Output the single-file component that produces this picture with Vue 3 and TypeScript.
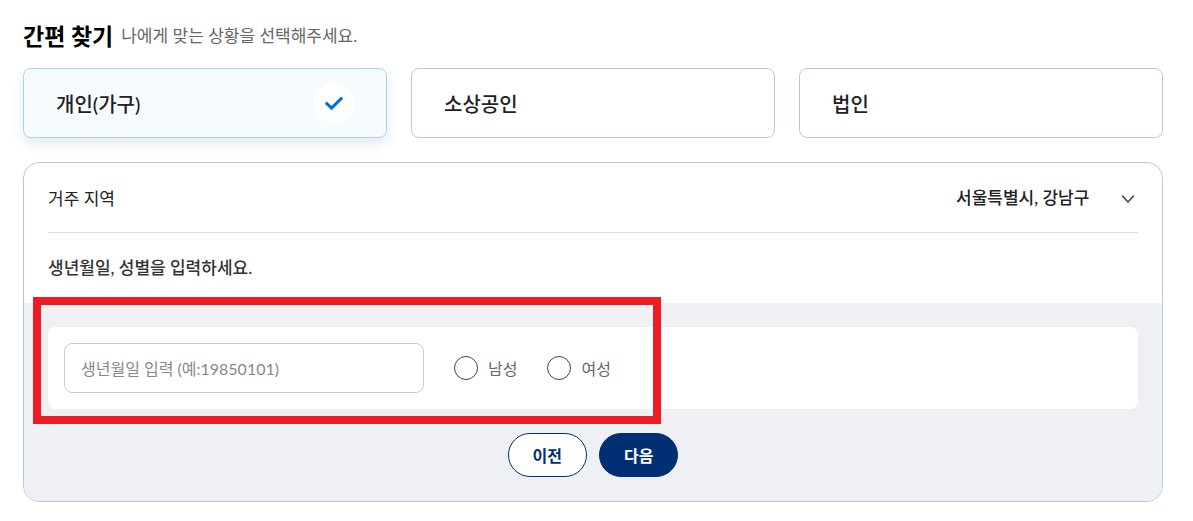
<script setup lang="ts">
import { ref } from 'vue'

const types: string[] = ['개인(가구)', '소상공인', '법인']
const selectedType = ref<string>(types[0])
const regions: string[] = ['서울특별시, 강남구']
const region = ref<string>(regions[0])
const birth = ref<string>('')
const gender = ref<string>('')
const genders = [
  { value: 'male', label: '남성' },
  { value: 'female', label: '여성' },
]
</script>

<template>
  <main class="finder">
    <header class="head">
      <h1>간편 찾기</h1>
      <p>나에게 맞는 상황을 선택해주세요.</p>
    </header>

    <div class="types">
      <button
        v-for="t in types"
        :key="t"
        type="button"
        class="type"
        :class="{ active: selectedType === t }"
        :aria-pressed="selectedType === t"
        @click="selectedType = t"
      >
        <span>{{ t }}</span>
        <span v-if="selectedType === t" class="check">
          <svg width="20" height="16" viewBox="0 0 20 16" fill="none" aria-hidden="true">
            <path d="M1.8 7.7 7.5 13.1 18.2 2.7" stroke="#0070e6" stroke-width="3" />
          </svg>
        </span>
      </button>
    </div>

    <form class="panel" @submit.prevent>
      <div class="region">
        <label for="region">거주 지역</label>
        <div class="picker">
          <select id="region" v-model="region">
            <option v-for="r in regions" :key="r" :value="r">{{ r }}</option>
          </select>
          <svg width="14" height="10" viewBox="0 0 14 10" fill="none" aria-hidden="true">
            <path d="M1 2.5 7 9 13 2.5" stroke="#444" stroke-width="1.5" />
          </svg>
        </div>
      </div>
      <h2>생년월일, 성별을 입력하세요.</h2>

      <div class="answer">
        <div class="box">
          <div class="fields">
            <input
              v-model="birth"
              class="birth"
              type="text"
              inputmode="numeric"
              aria-label="생년월일"
              placeholder="생년월일 입력 (예:19850101)"
            />
            <label v-for="g in genders" :key="g.value" class="gender">
              <input v-model="gender" type="radio" name="gender" :value="g.value" />
              <span>{{ g.label }}</span>
            </label>
            <div class="highlight" aria-hidden="true"></div>
          </div>
        </div>
        <div class="actions">
          <button type="button" class="prev">이전</button>
          <button type="submit" class="next">다음</button>
        </div>
      </div>
    </form>
  </main>
</template>

<style>
body {
  background: #fff;
}
</style>

<style scoped>
* {
  box-sizing: border-box;
}
.finder {
  padding: 20px 30px 19px 23px;
  font-family: Lato, 'Noto Sans CJK KR', sans-serif;
  color: #222;
}
button,
input,
select {
  font-family: inherit;
}
.head {
  display: flex;
  align-items: center;
  gap: 8px;
  height: 32px;
  margin-bottom: 16px;
}
h1 {
  margin: 0;
  font-size: 23px;
  line-height: 32px;
  font-weight: 700;
  color: #000;
}
.head p {
  margin: 0;
  font-size: 17px;
  line-height: 32px;
  color: #666;
}
.types {
  display: grid;
  grid-template-columns: repeat(3, 1fr);
  gap: 24px;
}
.type {
  display: flex;
  align-items: center;
  justify-content: space-between;
  height: 70px;
  padding: 0 32px;
  border: 1px solid #b9c8df;
  border-radius: 8px;
  background: #fff;
  color: #222;
  font-size: 20px;
  font-weight: 500;
  cursor: pointer;
}
.type.active {
  border-color: #aad1f8;
  background: #f5fbff;
  box-shadow: 0 6px 12px rgba(20, 50, 110, 0.1);
}
.check {
  display: flex;
  align-items: center;
  justify-content: center;
  width: 40px;
  height: 40px;
  border-radius: 50%;
  background: #fff;
}
.panel {
  margin-top: 24px;
  border: 1px solid #b9c8df;
  border-radius: 16px;
  overflow: hidden;
}
.region {
  display: flex;
  align-items: center;
  justify-content: space-between;
  height: 70px;
  margin: 0 24px;
  border-bottom: 1px solid #ddd;
  font-size: 17px;
}
.picker {
  display: flex;
  align-items: center;
  gap: 31px;
  padding-right: 3px;
}
select {
  appearance: none;
  margin: 0;
  padding: 0;
  border: 0;
  background: none;
  color: #222;
  font-size: 17px;
  line-height: 26px;
  font-weight: 500;
}
h2 {
  margin: 0;
  padding: 0 24px;
  font-size: 17px;
  line-height: 70px;
  font-weight: 500;
  color: #333;
}
.answer {
  padding: 24px;
  background: #eff0f4;
}
.box {
  padding: 16px;
  border-radius: 8px;
  background: #fff;
}
.fields {
  position: relative;
  display: flex;
  align-items: center;
  gap: 30px;
}
.birth {
  width: 360px;
  height: 50px;
  margin: 0;
  padding: 0 16px;
  border: 1px solid #ccc;
  border-radius: 8px;
  background: #fff;
  color: #222;
  font-size: 16px;
}
.birth::placeholder {
  color: #888;
  opacity: 1;
}
.gender {
  display: flex;
  align-items: center;
  gap: 10px;
  font-size: 16px;
  color: #666;
}
.gender input {
  appearance: none;
  width: 24px;
  height: 24px;
  margin: 0;
  border: 1px solid #444;
  border-radius: 50%;
  background: #fff;
}
.gender input:checked {
  border: 7px solid #002f73;
}
.highlight {
  position: absolute;
  top: -46px;
  left: -31px;
  width: 628px;
  height: 127px;
  border: 8px solid #ed1c24;
  pointer-events: none;
}
.actions {
  display: flex;
  justify-content: center;
  gap: 12px;
  margin-top: 24px;
}
.actions button {
  height: 44px;
  padding: 0 24px;
  border: 1px solid #002f73;
  border-radius: 22px;
  font-size: 16px;
  font-weight: 700;
  cursor: pointer;
}
.prev {
  background: #fff;
  color: #002f73;
}
.next {
  background: #002f73;
  color: #fff;
}
</style>
